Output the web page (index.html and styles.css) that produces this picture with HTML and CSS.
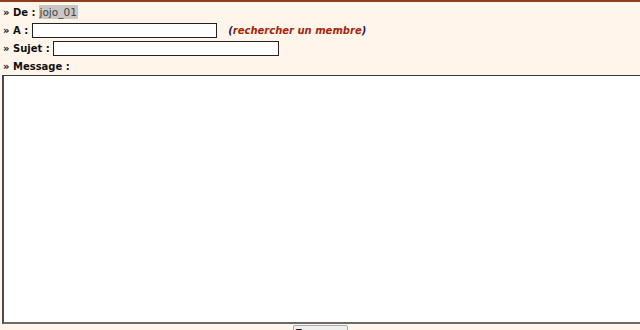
FILE: index.html
```html
<!DOCTYPE html>
<html lang="fr">
<head>
<meta charset="utf-8">
<title>Message</title>
<link rel="stylesheet" href="styles.css">
</head>
<body>
<form class="panel">
  <div class="row"><span class="label">» De :</span><span class="from">jojo_01</span></div>
  <div class="row"><span class="label">» A :</span><input class="field field-to" type="text"><span class="search">(<a href="#">rechercher un membre</a>)</span></div>
  <div class="row"><span class="label">» Sujet :</span><input class="field field-subject" type="text"></div>
  <div class="row"><span class="label">» Message :</span></div>
  <textarea class="message"></textarea>
  <div class="actions"><button type="button" class="send">Envoyer</button></div>
</form>
</body>
</html>
```

FILE: styles.css
```css
html, body {
  margin: 0;
  padding: 0;
  overflow: hidden;
  background: #ffffff;
}
body {
  font-family: "DejaVu Sans", Verdana, sans-serif;
  font-size: 10px;
  color: #111;
}
.panel {
  border-top: 2px solid #8e3c1c;
  background: #fff5eb;
  padding: 1px 0 0 0;
  width: 640px;
}
.row {
  display: flex;
  align-items: center;
  height: 18px;
  padding-left: 3px;
}
.label {
  font-weight: bold;
  margin-right: 3px;
  white-space: pre;
}
.from {
  background: #c9c7c4;
  color: #444;
  padding: 1px 1px;
  font-size: 10.5px;
}
.field {
  box-sizing: border-box;
  height: 15px;
  border: 1px solid #222;
  background: #fff;
  padding: 0;
  margin: 0;
  font: inherit;
}
.field-to { width: 185px; margin-left: 1px; }
.field-subject { width: 226px; }
.search {
  margin-left: 11px;
  font-weight: bold;
  font-style: italic;
  color: #1c1c4a;
}
.search a {
  color: #a3260c;
  text-decoration: none;
}
.message {
  display: block;
  box-sizing: border-box;
  margin: 0 0 0 2px;
  width: 660px;
  height: 249px;
  border-style: solid;
  border-width: 1px 0 2px 2px;
  border-color: #3a3a3a #3a3a3a #6a6a6a #4a4a4a;
  background: #fff;
  resize: none;
  padding: 0;
}
.actions {
  display: flex;
  justify-content: center;
  padding-top: 1px;
}
.send {
  box-sizing: border-box;
  width: 55px;
  height: 20px;
  font-family: "DejaVu Sans", Verdana, sans-serif;
  font-size: 11px;
  font-weight: bold;
  line-height: 13px;
  color: #111;
  background: #efefef;
  border: 1px solid #a8a8a8;
  border-radius: 2px;
  padding: 1px 0 0 0;
  display: flex;
  align-items: flex-start;
  justify-content: center;
}
```
